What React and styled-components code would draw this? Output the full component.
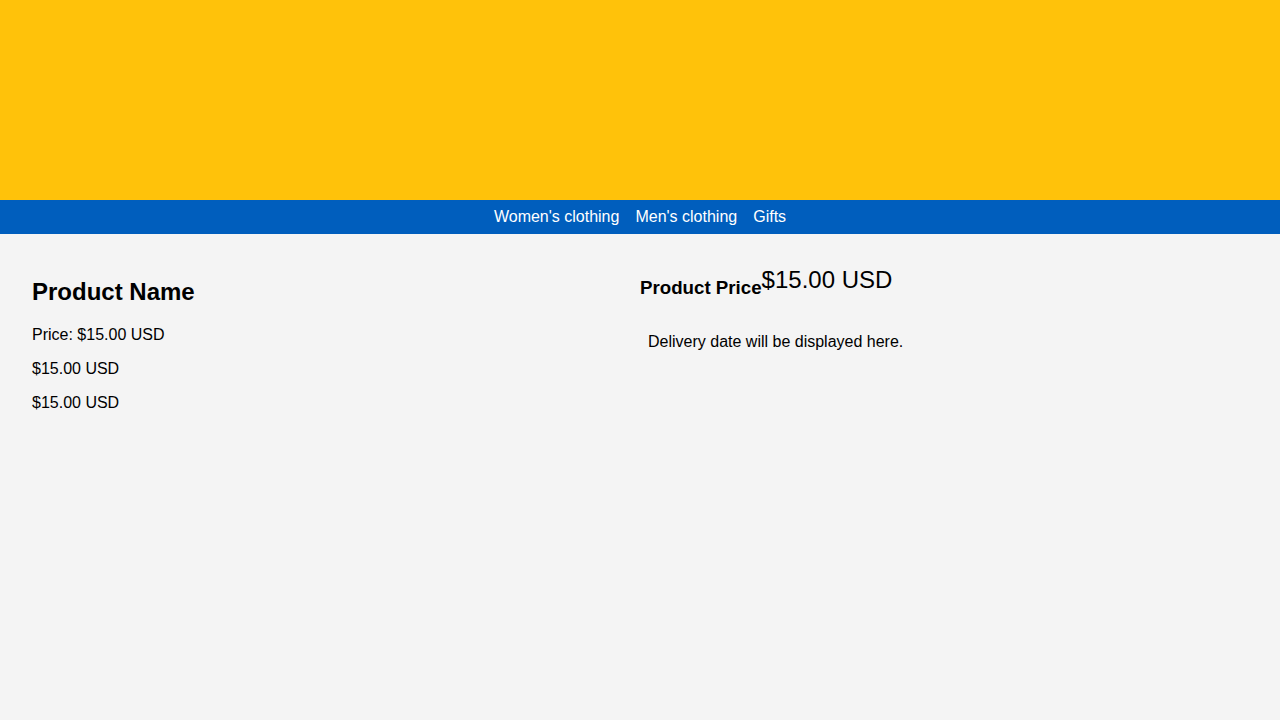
import React from "react";
import styled, { createGlobalStyle } from "styled-components";

const GlobalStyle = createGlobalStyle`
  body {
    margin: 0;
    background-color: #f4f4f4;
    font-family: "Liberation Sans", Arial, sans-serif;
    color: #000;
  }
`;

const Banner = styled.header`
  height: 200px;
  background-color: #ffc20a;
`;

const Nav = styled.nav`
  height: 34px;
  background-color: #005ebd;
  display: flex;
  justify-content: center;
  align-items: center;
  gap: 16px;
`;

const NavLink = styled.a`
  color: #fff;
  font-size: 16px;
  text-decoration: none;
  cursor: pointer;
`;

const Main = styled.main`
  display: grid;
  grid-template-columns: 1fr 1fr;
  padding: 24px 32px;
`;

const Column = styled.section``;

const Title = styled.h2`
  font-size: 24px;
  margin: 20px 0;
`;

const Line = styled.p`
  font-size: 16px;
  margin: 16px 0;
  padding: ${(p) => (p.$indent ? "0 8px" : "0")};
`;

const PriceRow = styled.div`
  display: flex;
`;

const PriceLabel = styled.h3`
  font-size: 18.72px;
  margin: 18.72px 0;
`;

const PriceValue = styled.span`
  font-size: 24px;
  margin-top: 8px;
`;

export default function App() {
  return (
    <>
      <GlobalStyle />
      <Banner />
      <Nav>
        <NavLink>Women's clothing</NavLink>
        <NavLink>Men's clothing</NavLink>
        <NavLink>Gifts</NavLink>
      </Nav>
      <Main>
        <Column>
          <Title>Product Name</Title>
          <Line>Price: $15.00 USD</Line>
          <Line>$15.00 USD</Line>
          <Line>$15.00 USD</Line>
        </Column>
        <Column>
          <PriceRow>
            <PriceLabel>Product Price</PriceLabel>
            <PriceValue>$15.00 USD</PriceValue>
          </PriceRow>
          <Line $indent>Delivery date will be displayed here.</Line>
        </Column>
      </Main>
    </>
  );
}
